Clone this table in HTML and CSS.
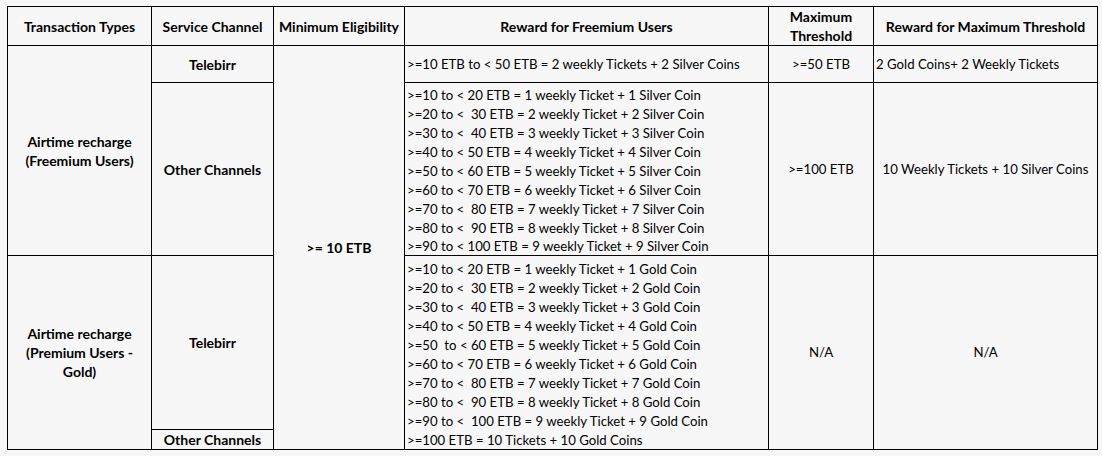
FILE: index.html
```html
<!DOCTYPE html>
<html>
<head>
<meta charset="utf-8">
<link rel="stylesheet" href="styles.css">
</head>
<body>
<table class="grid">
  <colgroup>
    <col class="c1"><col class="c2"><col class="c3"><col class="c4"><col class="c5"><col class="c6">
  </colgroup>
  <tr class="rh">
    <th>Transaction Types</th>
    <th>Service Channel</th>
    <th>Minimum Eligibility</th>
    <th>Reward for Freemium Users</th>
    <th>Maximum<br>Threshold</th>
    <th>Reward for Maximum Threshold</th>
  </tr>
  <tr class="r1">
    <td rowspan="10" class="b">Airtime recharge<br>(Freemium Users)</td>
    <td class="b">Telebirr</td>
    <td rowspan="20" class="b">&gt;= 10 ETB</td>
    <td class="txt">&gt;=10 ETB to &lt; 50 ETB = 2 weekly Tickets + 2 Silver Coins</td>
    <td>&gt;=50 ETB</td>
    <td class="txt">2 Gold Coins+ 2 Weekly Tickets</td>
  </tr>
  <tr class="g1">
    <td rowspan="9" class="b">Other Channels</td>
    <td class="ln top">&gt;=10 to &lt; 20 ETB = 1 weekly Ticket + 1 Silver Coin</td>
    <td rowspan="9">&gt;=100 ETB</td>
    <td rowspan="9">10 Weekly Tickets + 10 Silver Coins</td>
  </tr>
  <tr class="rl"><td class="ln">&gt;=20 to &lt;  30 ETB = 2 weekly Ticket + 2 Silver Coin</td></tr>
  <tr class="rl"><td class="ln">&gt;=30 to &lt;  40 ETB = 3 weekly Ticket + 3 Silver Coin</td></tr>
  <tr class="rl"><td class="ln">&gt;=40 to &lt; 50 ETB = 4 weekly Ticket + 4 Silver Coin</td></tr>
  <tr class="rl"><td class="ln">&gt;=50 to &lt; 60 ETB = 5 weekly Ticket + 5 Silver Coin</td></tr>
  <tr class="rl"><td class="ln">&gt;=60 to &lt; 70 ETB = 6 weekly Ticket + 6 Silver Coin</td></tr>
  <tr class="rl"><td class="ln">&gt;=70 to &lt;  80 ETB = 7 weekly Ticket + 7 Silver Coin</td></tr>
  <tr class="rl"><td class="ln">&gt;=80 to &lt;  90 ETB = 8 weekly Ticket + 8 Silver Coin</td></tr>
  <tr class="rl"><td class="ln bot">&gt;=90 to &lt; 100 ETB = 9 weekly Ticket + 9 Silver Coin</td></tr>
  <tr class="g2">
    <td rowspan="10" class="b">Airtime recharge<br>(Premium Users -<br>Gold)</td>
    <td rowspan="9" class="b">Telebirr</td>
    <td class="ln top">&gt;=10 to &lt; 20 ETB = 1 weekly Ticket + 1 Gold Coin</td>
    <td rowspan="10">N/A</td>
    <td rowspan="10">N/A</td>
  </tr>
  <tr class="rl"><td class="ln">&gt;=20 to &lt;  30 ETB = 2 weekly Ticket + 2 Gold Coin</td></tr>
  <tr class="rl"><td class="ln">&gt;=30 to &lt;  40 ETB = 3 weekly Ticket + 3 Gold Coin</td></tr>
  <tr class="rl"><td class="ln">&gt;=40 to &lt; 50 ETB = 4 weekly Ticket + 4 Gold Coin</td></tr>
  <tr class="rl"><td class="ln">&gt;=50  to &lt; 60 ETB = 5 weekly Ticket + 5 Gold Coin</td></tr>
  <tr class="rl"><td class="ln">&gt;=60 to &lt; 70 ETB = 6 weekly Ticket + 6 Gold Coin</td></tr>
  <tr class="rl"><td class="ln">&gt;=70 to &lt;  80 ETB = 7 weekly Ticket + 7 Gold Coin</td></tr>
  <tr class="rl"><td class="ln">&gt;=80 to &lt;  90 ETB = 8 weekly Ticket + 8 Gold Coin</td></tr>
  <tr class="rl"><td class="ln">&gt;=90 to &lt;  100 ETB = 9 weekly Ticket + 9 Gold Coin</td></tr>
  <tr class="rl">
    <td class="b">Other Channels</td>
    <td class="ln bot">&gt;=100 ETB = 10 Tickets + 10 Gold Coins</td>
  </tr>
</table>
</body>
</html>
```
FILE: styles.css
```css
html, body {
  margin: 0;
  background: #f7f7f7;
}
body {
  padding: 6px 0 0 7px;
  font-family: Lato, "Liberation Sans", sans-serif;
  font-size: 13.2px;
  color: #000;
}
.grid {
  border-collapse: collapse;
  table-layout: fixed;
  width: 1091px;
}
.c1 { width: 144px; }
.c2 { width: 122px; }
.c3 { width: 131px; }
.c4 { width: 364px; }
.c5 { width: 105px; }
.c6 { width: 224px; }
.grid th,
.grid td {
  border: 1px solid #000;
  padding: 0 2px;
  text-align: center;
  vertical-align: middle;
  line-height: 19px;
  font-weight: 400;
}
.grid th,
.grid .b {
  font-weight: 700;
  font-size: 14px;
}
.rh { height: 37px; }
.r1 { height: 37px; }
.g1 { height: 21px; }
.g2 { height: 22px; }
.rl { height: 19px; }
.grid .txt {
  text-align: left;
  white-space: pre;
}
.grid .ln {
  text-align: left;
  vertical-align: bottom;
  white-space: pre;
  border-top: none;
  border-bottom: none;
  padding: 0 2px;
  line-height: 17px;
}
.grid .ln.top { border-top: 1px solid #000; }
.grid .ln.bot { border-bottom: 1px solid #000; }
```
